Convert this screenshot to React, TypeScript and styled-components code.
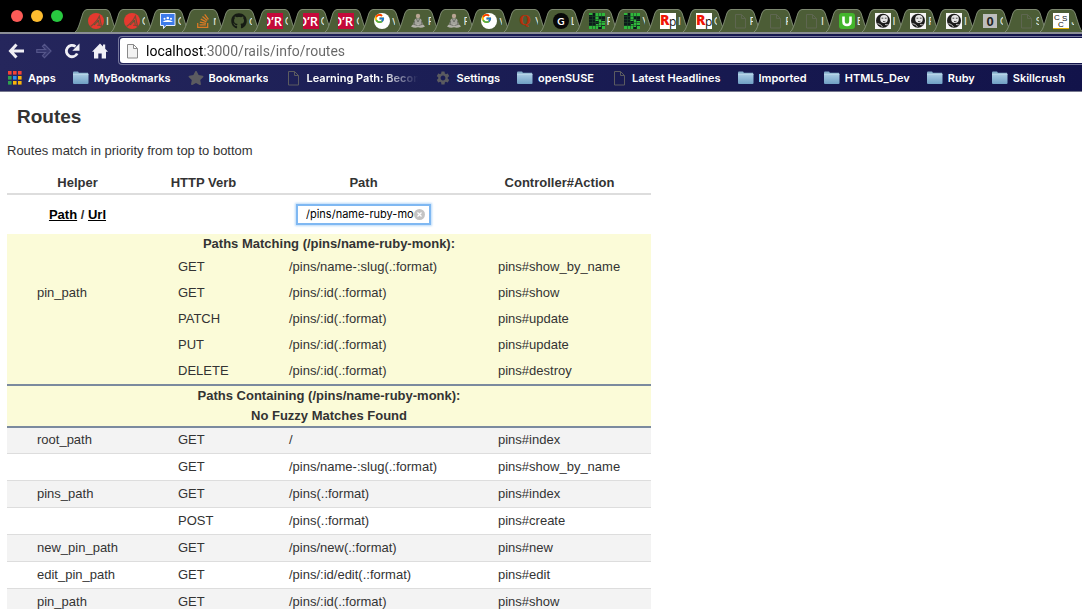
import React from 'react';
import styled, { createGlobalStyle } from 'styled-components';
import { FaGithub, FaStackOverflow, FaStar } from 'react-icons/fa';
import { FcGoogle } from 'react-icons/fc';
import { MdSettings } from 'react-icons/md';

const uiFont = `Inter, "Liberation Sans", sans-serif`;

const GlobalStyle = createGlobalStyle`
  *, *::before, *::after { box-sizing: border-box; }
  body {
    margin: 0;
    background: #fff;
    color: #333;
    font-family: "Liberation Sans", Arial, sans-serif;
    font-size: 13px;
    line-height: 18px;
  }
`;

const Browser = styled.div`
  display: flex;
  flex-direction: column;
  height: 100vh;
  overflow: hidden;
`;

const TabStrip = styled.div`
  display: flex;
  flex: none;
  height: 32px;
  padding: 0 5px 0 11px;
  background: #000;
`;

const WindowControls = styled.div`
  display: flex;
  flex: none;
  align-items: center;
  gap: 8px;
  width: 65px;
`;

const Light = styled.button<{ $color: string }>`
  width: 12px;
  height: 12px;
  padding: 0;
  border: 0;
  border-radius: 50%;
  background: ${(p) => p.$color};
`;

const Tabs = styled.div`
  display: flex;
  flex: 1;
  min-width: 0;
  align-items: flex-end;
`;

const TabButton = styled.button`
  position: relative;
  display: flex;
  flex: 1 1 0;
  align-items: center;
  gap: 2px;
  min-width: 0;
  height: 23px;
  padding: 0 0 0 12px;
  border: 0;
  background: none;
  color: #e4e8df;
  font: 400 11px/16px ${uiFont};
`;

const TabShape = styled.svg`
  position: absolute;
  left: -1px;
  top: 0;
`;

const Favicon = styled.span`
  position: relative;
  display: block;
  flex: none;
  width: 16px;
  height: 16px;
  svg { display: block; }
`;

const TabTitle = styled.span`
  position: relative;
  flex: none;
  width: 3px;
  overflow: hidden;
  text-align: left;
`;

const Chrome = styled.header`
  flex: none;
  border-top: 2px solid #8b8e96;
  border-bottom: 1px solid #77798f;
  background: linear-gradient(90deg, #25265c, #1c1f56 35%, #12134a);
`;

const Toolbar = styled.div`
  display: flex;
  align-items: center;
  height: 33px;
  padding: 2px 0 2px 8px;
`;

const NavButtons = styled.nav`
  display: flex;
  flex: none;
  gap: 12px;
  width: 110px;
`;

const NavButton = styled.button<{ $dim?: boolean }>`
  width: 16px;
  height: 16px;
  padding: 0;
  border: 0;
  background: none;
  color: ${(p) => (p.$dim ? '#55568a' : '#f0eff5')};
  svg { display: block; }
`;

const Omnibox = styled.label`
  display: flex;
  flex: 1;
  align-self: stretch;
  border: 1px solid #75779c;
  border-right: 0;
  border-radius: 4px 0 0 4px;
  padding: 1px 0 1px 1px;
`;

const OmniboxField = styled.span`
  display: flex;
  flex: 1;
  align-items: center;
  gap: 6px;
  padding-left: 4px;
  border-radius: 3px 0 0 3px;
  background: #fff;
  svg { flex: none; }
`;

const UrlInput = styled.input`
  flex: 1;
  min-width: 0;
  height: 22px;
  padding: 0;
  border: 0;
  outline: 0;
  font: 400 14px/22px Roboto, ${uiFont};
  color: #666;
  background: linear-gradient(90deg, #000 57px, #666 57px);
  background-clip: text;
  -webkit-background-clip: text;
  -webkit-text-fill-color: transparent;
`;

const BookmarkBar = styled.nav`
  display: flex;
  gap: 17px;
  height: 24px;
  padding: 0 7px 2px;
  overflow: hidden;
`;

const Bookmark = styled.a`
  display: flex;
  flex: none;
  align-items: center;
  gap: 5px;
  color: #fff;
  font: 600 11px/16px ${uiFont};
  text-decoration: none;
  svg { display: block; flex: none; }
`;

const BookmarkText = styled.span<{ $fade?: boolean }>`
  max-width: 112px;
  overflow: hidden;
  white-space: nowrap;
  ${(p) => p.$fade && 'mask-image: linear-gradient(90deg, #000 76px, transparent 112px);'}
`;

const Page = styled.main`
  flex: 1;
  min-height: 0;
  overflow-y: auto;
  scrollbar-width: none;
  padding: 13px 7px 0;
`;

const Title = styled.h2`
  margin: 0;
  padding-left: 10px;
  font-size: 19px;
  line-height: 24px;
`;

const Intro = styled.p`
  margin: 13px 0;
`;

const RouteTable = styled.table`
  width: 644px;
  table-layout: fixed;
  border-collapse: separate;
  border-spacing: 0;
`;

const Col = styled.col<{ $w: number }>`
  width: ${(p) => p.$w}px;
`;

const HeadCell = styled.th`
  height: 22px;
  padding: 0;
  border-bottom: 2px solid #ddd;
`;

const SearchRow = styled.tr`
  th, td { height: 39px; padding: 0; text-align: center; }
`;

const ToggleLink = styled.a`
  color: #000;
`;

const SearchBox = styled.div`
  display: flex;
  align-items: center;
  width: 131px;
  height: 17px;
  margin: 0 auto;
  padding-right: 4px;
  background: #fff;
  box-shadow: 0 0 0 2px #7fb8f2, 0 0 2px 3px #b9d9f9;
`;

const SearchInput = styled.input`
  flex: 1;
  min-width: 0;
  height: 17px;
  margin-left: 8px;
  padding: 0;
  border: 0;
  outline: 0;
  background: none;
  color: #000;
  font: 400 11px/17px ${uiFont};
  appearance: none;
  &::-webkit-search-cancel-button { display: none; }
`;

const ClearButton = styled.button`
  flex: none;
  width: 11px;
  height: 11px;
  padding: 0;
  border: 0;
  background: none;
  svg { display: block; }
`;

const Matches = styled.tbody`
  background: #fbfbd8;
  tr:last-child > * { border-bottom: 2px solid #7b8a9e; }
`;

const MatchHead = styled.th`
  padding: 1px 0;
`;

const Cell = styled.td`
  padding: 4px 0 4px 30px;
  white-space: nowrap;
`;

const Routes = styled.tbody`
  tr:nth-child(odd) { background: #f3f3f3; }
  td { border-bottom: 1px solid #ddd; }
  tr:first-child ${Cell} { padding-top: 3px; }
`;

const PageIcon = ({ stroke, fill = 'none' }: { stroke: string; fill?: string }) => (
  <svg width="16" height="16" viewBox="0 0 16 16" fill={fill} stroke={stroke}>
    <path d="M3.5 1.5h6l4 4v9.5h-10z M9.5 1.5v4h4" />
  </svg>
);

const FolderIcon = () => (
  <svg width="16" height="16" viewBox="0 0 16 16">
    <defs>
      <linearGradient id="folder" x1="0" y1="0" x2="0" y2="1">
        <stop offset="0" stopColor="#a9cbe3" />
        <stop offset="1" stopColor="#6f9fc4" />
      </linearGradient>
    </defs>
    <path d="M0 2.700q0-1.200 1-1.200h3.600q.9 0 1.200 1.200H15V7H0z" fill="#84aecb" />
    <path d="M0 4.100h15.500V13q0 1-1 1H1q-1 0-1-1z" fill="url(#folder)" />
    <path d="M0 4.100h15.500" stroke="#c7dfef" strokeWidth=".8" />
  </svg>
);

const AppsIcon = () => {
  const colors = ['#f44336', '#f44336', '#f44336', '#2fa04f', '#2d8cf0', '#f9b40b', '#2fa04f', '#f9b40b', '#f9b40b'];
  return (
    <svg width="16" height="16" viewBox="0 0 16 16">
      {colors.map((c, i) => (
        <rect key={i} x={1 + (i % 3) * 5} y={1 + Math.floor(i / 3) * 5} width="3.6" height="3.6" fill={c} />
      ))}
    </svg>
  );
};

const icons: Record<string, React.ReactNode> = {
  sail: (
    <svg width="16" height="16" viewBox="0 0 16 16">
      <circle cx="8" cy="8" r="8" fill="#e6392f" />
      <path d="M2.500 13.500C6 11 9.300 7.500 11.300 3.200l2.300 10.300c-1.500-1.400-3-1.600-4.300-1" fill="none" stroke="#7a4a35" strokeWidth="1.200" />
      <path d="M6 12q3-1.500 4.300-5l1 4.600" stroke="#4f5d38" strokeWidth="1" fill="none" />
    </svg>
  ),
  classroom: (
    <svg width="16" height="16" viewBox="0 0 16 16">
      <path d="M.5.5h14.500v12H6l-2.500 3v-3h-3z" fill="#3d7bea" stroke="#e8eefc" />
      <circle cx="4.500" cy="5.800" r="1" fill="#fff" />
      <circle cx="11" cy="5.800" r="1" fill="#fff" />
      <circle cx="7.800" cy="5" r="1.300" fill="#fff" />
      <path d="M2.500 9q2.500-2 5.300-2T13 9z" fill="#fff" />
    </svg>
  ),
  stack: <FaStackOverflow size={16} color="#dd7a24" />,
  github: <FaGithub size={16} color="#161b14" />,
  oreilly: (
    <svg width="16" height="16" viewBox="0 0 16 16">
      <rect width="16" height="16" fill="#c4093a" />
      <text x="-6" y="13" fontFamily="Open Sans" fontWeight="600" fontSize="13" fill="#fff">O’R</text>
    </svg>
  ),
  google: (
    <svg width="16" height="16" viewBox="0 0 16 16">
      <circle cx="8" cy="8" r="8" fill="#fff" />
      <FcGoogle x={0} y={0} width={16} height={16} />
    </svg>
  ),
  monk: (
    <svg width="16" height="16" viewBox="0 0 16 16">
      <circle cx="8" cy="3" r="2.200" fill="#b9a593" />
      <path d="M5 6q3-1.500 6 0l1.800 5H3.200z" fill="#a3a39c" />
      <path d="M1 13.500q1-2.500 4-2.500h6q3 0 4 2.500-3.500 2-7 .8-3.500 1.200-7-.8z" fill="#b3b1aa" />
      <path d="M6.500 6l1.500 3 1.500-3M4.600 8l-.6 3.500 3.500 1M11.400 8l.6 3.500-3.500 1" fill="none" stroke="#5f625a" strokeWidth=".8" />
    </svg>
  ),
  quora: (
    <svg width="16" height="16" viewBox="0 0 16 16">
      <text x="8" y="12" textAnchor="middle" fontFamily="DejaVu Serif" fontWeight="700" fontSize="13" fill="#b5300c">Q</text>
    </svg>
  ),
  gdisc: (
    <svg width="16" height="16" viewBox="0 0 16 16">
      <circle cx="8" cy="8" r="8" fill="#080808" />
      <text x="8" y="11.500" textAnchor="middle" fontFamily="Lato" fontWeight="700" fontSize="10" fill="#fff">G</text>
    </svg>
  ),
  pixels: (
    <svg width="16" height="16" viewBox="0 0 16 16">
      <rect width="16" height="16" fill="#0c1a1a" />
      <path d="M0 0h4v2H0zM6 0h10v3H6zM6 3h4v3H6zM6 6h6v2H6zM10 8h6v4h-6zM7 11h5v3H7zM0 13h9v3H0zM13 13h3v3h-3z" fill="#2fb83b" />
      <path d="M0 3.500h16M0 6.500h16M0 9.500h16M0 12.500h16M3.500 0v16M6.500 0v16M9.500 0v16M12.500 0v16" stroke="#1d4a28" strokeWidth=".6" />
    </svg>
  ),
  rp: (
    <svg width="16" height="16" viewBox="0 0 16 16">
      <rect width="16" height="16" fill="#fff" />
      <text x="0" y="12" fontFamily="Open Sans" fontWeight="800" fontSize="14" fill="#f01505">R</text>
      <text x="9" y="13" fontFamily="Open Sans" fontSize="12" fill="#111">p</text>
    </svg>
  ),
  page: <PageIcon stroke="#5e6650" />,
  udemy: (
    <svg width="16" height="16" viewBox="0 0 16 16">
      <rect width="16" height="16" rx="3" fill="#43b52c" />
      <path d="M4.500 3.500v5q0 3.500 3.500 3.500t3.500-3.500v-5" fill="none" stroke="#fff" strokeWidth="2.600" />
    </svg>
  ),
  portrait: (
    <svg width="16" height="16" viewBox="0 0 16 16">
      <rect width="16" height="16" fill="#f5f5f5" />
      <circle cx="8" cy="7.800" r="7" fill="#1b1b1b" />
      <ellipse cx="9" cy="6" rx="3.800" ry="4" fill="#e6e6e6" />
      <path d="M6.500 5.200h1.800M9.800 5.200h1.800M8 8.300q1.200.8 2.400 0" stroke="#333" strokeWidth=".9" fill="none" />
      <path d="M2.500 10.500q3.500.5 5 3.500M10 11.500l3.500.5" stroke="#bbb" fill="none" />
    </svg>
  ),
  zero: (
    <svg width="16" height="16" viewBox="0 0 16 16">
      <rect x="1" y="1" width="14" height="14" fill="#bdbdbd" />
      <text x="8" y="12.500" textAnchor="middle" fontFamily="Liberation Sans" fontWeight="700" fontSize="13" fill="#222">0</text>
    </svg>
  ),
  csc: (
    <svg width="16" height="16" viewBox="0 0 16 16">
      <rect width="16" height="16" fill="#fff" />
      <rect y="15" width="16" height="1" fill="#e2b100" />
      <text x="1" y="7" fontFamily="Liberation Sans" fontSize="8" fill="#111">C</text>
      <text x="9" y="8" fontFamily="Liberation Sans" fontSize="8" fill="#111">S</text>
      <text x="5" y="14" fontFamily="Liberation Sans" fontSize="8" fill="#111">C</text>
    </svg>
  ),
};

const tabs: [string, string][] = [
  ['sail', 'I'], ['sail', 'C'], ['classroom', 'C'], ['stack', 'r'], ['github', 'c'],
  ['oreilly', 'C'], ['oreilly', 'C'], ['oreilly', 'C'], ['google', 'v'], ['monk', 'F'],
  ['monk', 'F'], ['google', 'v'], ['quora', 'V'], ['gdisc', 'L'], ['pixels', 'F'],
  ['pixels', 'V'], ['rp', 'I'], ['rp', 'C'], ['page', 'F'], ['page', 'F'], ['page', 'I'],
  ['udemy', 'E'], ['portrait', 'I'], ['portrait', 'F'], ['portrait', 'I'], ['zero', 'C'],
  ['page', 'S'], ['csc', 'J'],
];

const bookmarks: { icon: React.ReactNode; text: string; fade?: boolean }[] = [
  { icon: <AppsIcon />, text: 'Apps' },
  { icon: <FolderIcon />, text: 'MyBookmarks' },
  { icon: <FaStar size={16} color="#5b5b60" />, text: 'Bookmarks' },
  { icon: <PageIcon stroke="#5b5b60" />, text: 'Learning Path: Become', fade: true },
  { icon: <MdSettings size={16} color="#5b5b60" />, text: 'Settings' },
  { icon: <FolderIcon />, text: 'openSUSE' },
  { icon: <PageIcon stroke="#5b5b60" />, text: 'Latest Headlines' },
  { icon: <FolderIcon />, text: 'Imported' },
  { icon: <FolderIcon />, text: 'HTML5_Dev' },
  { icon: <FolderIcon />, text: 'Ruby' },
  { icon: <FolderIcon />, text: 'Skillcrush' },
];

type Route = [string, string, string, string];

const matches: Route[] = [
  ['', 'GET', '/pins/name-:slug(.:format)', 'pins#show_by_name'],
  ['pin_path', 'GET', '/pins/:id(.:format)', 'pins#show'],
  ['', 'PATCH', '/pins/:id(.:format)', 'pins#update'],
  ['', 'PUT', '/pins/:id(.:format)', 'pins#update'],
  ['', 'DELETE', '/pins/:id(.:format)', 'pins#destroy'],
];

const routes: Route[] = [
  ['root_path', 'GET', '/', 'pins#index'],
  ['', 'GET', '/pins/name-:slug(.:format)', 'pins#show_by_name'],
  ['pins_path', 'GET', '/pins(.:format)', 'pins#index'],
  ['', 'POST', '/pins(.:format)', 'pins#create'],
  ['new_pin_path', 'GET', '/pins/new(.:format)', 'pins#new'],
  ['edit_pin_path', 'GET', '/pins/:id/edit(.:format)', 'pins#edit'],
  ['pin_path', 'GET', '/pins/:id(.:format)', 'pins#show'],
];

const RouteRow = ({ route }: { route: Route }) => (
  <tr>
    {route.map((value, i) => (
      <Cell key={i}>{value}</Cell>
    ))}
  </tr>
);

const Tab = ({ icon, title }: { icon: string; title: string }) => (
  <TabButton aria-label={`Tab ${title}`}>
    <TabShape width="44" height="23" viewBox="0 0 44 23">
      <path d="M0 23C2 22 3 19 4.500 15L8 4Q9.500.5 12 .5H31Q33.500.5 35 4l3.500 11C40 19 41 22 43 23z" fill="#4c5d36" />
      <path d="M0 23C2 22 3 19 4.500 15L8 4Q9.500.5 12 .5H31Q33.500.5 35 4l3.500 11C40 19 41 22 43 23" fill="none" stroke="#87937a" strokeWidth=".9" />
    </TabShape>
    <Favicon>{icons[icon]}</Favicon>
    <TabTitle>{title}</TabTitle>
  </TabButton>
);

export default function App() {
  return (
    <Browser>
      <GlobalStyle />
      <TabStrip>
        <WindowControls>
          <Light $color="#fc5b57" aria-label="Close" />
          <Light $color="#fdbc2f" aria-label="Minimize" />
          <Light $color="#28c940" aria-label="Zoom" />
        </WindowControls>
        <Tabs>
          {tabs.map(([icon, title], i) => (
            <Tab key={i} icon={icon} title={title} />
          ))}
        </Tabs>
      </TabStrip>
      <Chrome>
        <Toolbar>
          <NavButtons>
            <NavButton aria-label="Back">
              <svg width="16" height="16" viewBox="0 0 16 16" fill="none" stroke="currentColor" strokeWidth="3">
                <path d="M2.500 8H16M8.500 1.500L2.500 8l6 6.500" />
              </svg>
            </NavButton>
            <NavButton $dim aria-label="Forward">
              <svg width="16" height="16" viewBox="0 0 16 16" fill="#36376e" stroke="currentColor" strokeWidth="1.200">
                <path d="M.8 6.500h8.700L6.500 3.300l2-2L15 8l-6.500 6.700-2-2 3-3.200H.8z" />
              </svg>
            </NavButton>
            <NavButton aria-label="Reload">
              <svg width="16" height="16" viewBox="0 0 16 16" fill="none" stroke="currentColor" strokeWidth="2.800">
                <path d="M13.200 10.500A5.700 5.700 0 1 1 11.500 3.500" />
                <path d="M15.500 .5v7.200H8.300z" fill="currentColor" stroke="none" />
              </svg>
            </NavButton>
            <NavButton aria-label="Home">
              <svg width="16" height="16" viewBox="0 0 16 16" fill="currentColor">
                <path d="M8 .5l3 3V1.500h2.200v4.200L16 8.700h-2V15.500H9.700V10.500H6.300v5H2V8.700H0z" />
              </svg>
            </NavButton>
          </NavButtons>
          <Omnibox>
            <OmniboxField>
              <PageIcon stroke="#8a8a8a" fill="#f2f2f2" />
              <UrlInput aria-label="Address" defaultValue="localhost:3000/rails/info/routes" />
            </OmniboxField>
          </Omnibox>
        </Toolbar>
        <BookmarkBar>
          {bookmarks.map((b) => (
            <Bookmark href="#" key={b.text}>
              {b.icon}
              <BookmarkText $fade={b.fade}>{b.text}</BookmarkText>
            </Bookmark>
          ))}
        </BookmarkBar>
      </Chrome>
      <Page>
        <Title>Routes</Title>
        <Intro>Routes match in priority from top to bottom</Intro>
        <RouteTable>
          <colgroup>
            <Col $w={141} />
            <Col $w={111} />
            <Col $w={209} />
            <Col $w={183} />
          </colgroup>
          <thead>
            <tr>
              <HeadCell>Helper</HeadCell>
              <HeadCell>HTTP Verb</HeadCell>
              <HeadCell>Path</HeadCell>
              <HeadCell>Controller#Action</HeadCell>
            </tr>
            <SearchRow>
              <th>
                <ToggleLink href="#">Path</ToggleLink> / <ToggleLink href="#">Url</ToggleLink>
              </th>
              <td />
              <td>
                <SearchBox>
                  <SearchInput type="search" aria-label="Path match" defaultValue="/pins/name-ruby-monk" />
                  <ClearButton aria-label="Clear">
                    <svg width="11" height="11" viewBox="0 0 11 11">
                      <circle cx="5.500" cy="5.500" r="5.500" fill="#c4c4c4" />
                      <path d="M3.500 3.500l4 4m0-4l-4 4" stroke="#fff" strokeWidth="1.200" />
                    </svg>
                  </ClearButton>
                </SearchBox>
              </td>
              <td />
            </SearchRow>
          </thead>
          <Matches>
            <tr>
              <MatchHead colSpan={4}>Paths Matching (/pins/name-ruby-monk):</MatchHead>
            </tr>
            {matches.map((r, i) => (
              <RouteRow key={i} route={r} />
            ))}
          </Matches>
          <Matches>
            <tr>
              <MatchHead colSpan={4}>Paths Containing (/pins/name-ruby-monk):</MatchHead>
            </tr>
            <tr>
              <MatchHead colSpan={4}>No Fuzzy Matches Found</MatchHead>
            </tr>
          </Matches>
          <Routes>
            {routes.map((r, i) => (
              <RouteRow key={i} route={r} />
            ))}
          </Routes>
        </RouteTable>
      </Page>
    </Browser>
  );
}
